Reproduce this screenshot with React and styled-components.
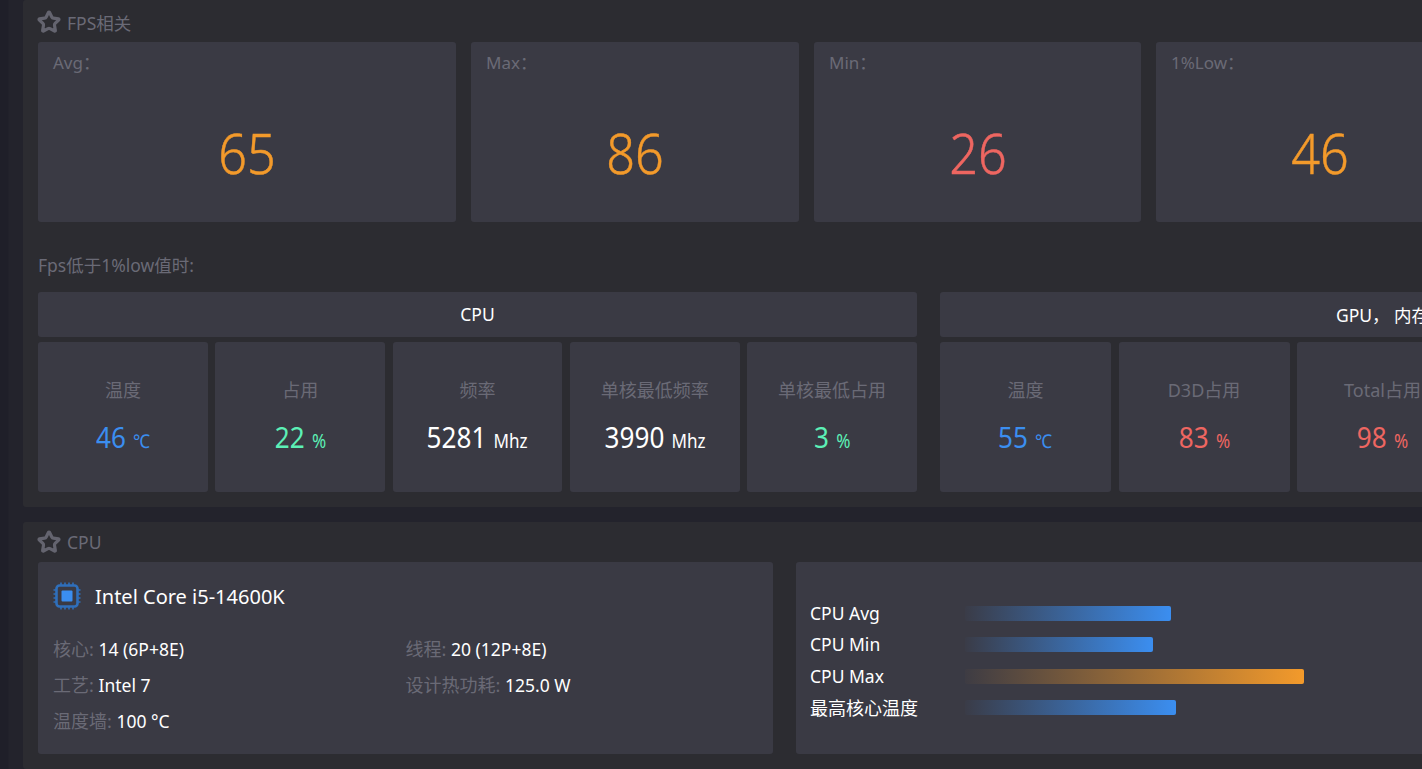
import React from 'react';
import styled, { createGlobalStyle } from 'styled-components';
import { Star } from 'lucide-react';

const Global = createGlobalStyle`
  html, body { margin: 0; padding: 0; height: 100%; overflow: hidden; background: #23232c; }
  * { box-sizing: border-box; }
  body { font-family: "Noto Sans", "Noto Sans CJK SC", sans-serif; }
`;

const muted = '#6a6a76';

const Page = styled.div`
  width: 1860px; height: 769px; overflow: hidden;
  display: flex; flex-direction: column; gap: 15px;
  padding-left: 23px;
  background: linear-gradient(90deg, #1f1f29 0, #1f1f29 8px, #23232c 9px);
`;
const Panel = styled.section`
  width: 1817px; flex: none;
  background: #2c2c31; border-radius: 3px;
  padding: 0 15px 15px;
`;
const PanelTitle = styled.div`
  height: ${p => p.$height}px; display: flex; align-items: center; gap: 6px;
  padding-top: ${p => p.$top}px; margin-left: -1px;
  color: ${muted}; font-size: 17.5px;
  svg { flex: none; }
`;
const Card = styled.div`
  background: #3a3a44; border-radius: 3px;
`;
const FpsRow = styled.div`
  display: grid; grid-template-columns: 418px 328px 327px 327px 1fr; gap: 15px;
`;
const FpsCard = styled(Card)`
  height: 180px; padding: 10px 15px;
  display: flex; flex-direction: column;
`;
const FpsLabel = styled.div`color: ${muted}; font-size: 17px; line-height: 22px;`;
const FpsValue = styled.div`
  flex: 1; display: flex; align-items: center; justify-content: center;
  padding-top: 18px; font-size: 56px; line-height: 60px; font-weight: 300;
  color: ${p => p.$color};
  span { display: inline-block; transform: scaleX(0.9); -webkit-text-stroke: 0.5px ${p => p.$color}; }
`;
const Hint = styled.div`
  color: ${muted}; font-size: 17.5px; line-height: 22px;
  margin: 32px 0 16px;
`;
const Groups = styled.div`
  display: grid; grid-template-columns: 879px 885px; gap: 23px;
`;
const Group = styled.div`display: flex; flex-direction: column; gap: 5px;`;
const GroupHead = styled(Card)`
  height: 45px; display: flex; align-items: center; justify-content: center;
  padding-bottom: 1px;
  color: #fff; font-size: 17.5px; white-space: pre;
`;
const Cells = styled.div`display: grid; grid-template-columns: repeat(5, 1fr); gap: 7.5px;`;
const Cell = styled(Card)`
  height: 150px; display: flex; flex-direction: column; align-items: center;
  padding-top: 36px;
`;
const CellLabel = styled.div`color: ${muted}; font-size: 18px; line-height: 25px;`;
const CellValue = styled.div`
  margin-top: 15px; font-size: 29px; line-height: 38px; color: ${p => p.$color};
  transform: scaleX(0.9);
  small { font-size: 19px; margin-left: 8px; }
`;
const CpuRow = styled.div`display: grid; grid-template-columns: 735px 1fr; gap: 23px;`;
const InfoCard = styled(Card)`height: 192px; padding: 18px 15px 0;`;
const InfoHead = styled.div`
  display: flex; align-items: center; gap: 14px; height: 32px;
  color: #fff; font-size: 20px;
`;
const InfoGrid = styled.div`
  display: grid; grid-template-columns: 352.5px 1fr;
  grid-auto-rows: 36px; font-size: 17.5px; line-height: 36px; margin-top: 19px;
  color: #fff;
`;
const InfoLabel = styled.span`color: ${muted}; font-size: 18px;`;
const BarsCard = styled(Card)`height: 192px; padding: 35.5px 15px 0;`;
const BarRow = styled.div`
  display: grid; grid-template-columns: 154px 1fr; align-items: center; height: 31.5px;
  color: #fff; font-size: 17.5px;
`;
const BarLabel = styled.div`
  margin: -1px 0 0 -1px; white-space: nowrap;
  font-size: ${p => (p.$cjk ? 18 : 17.5)}px;
`;
const Bar = styled.div`
  height: 15px; border-radius: 2px;
  background: linear-gradient(90deg, rgba(${p => p.$rgb}, 0.02), rgb(${p => p.$rgb}));
`;

const blue = '#3b8ef0', red = '#ee6661', orange = '#f39a2b', green = '#5cf0b6', white = '#fff';

const Chip = () => (
  <svg width="28" height="28" viewBox="0 0 28 28" fill="none">
    <rect x="3.5" y="3.5" width="21" height="21" rx="3" stroke="#2f6fbb" strokeWidth="2.6" />
    <rect x="8.5" y="8.5" width="11" height="11" rx="1" fill="#3b8ef0" />
    {[7, 11, 15, 19].map(v => (
      <g key={v} stroke="#2f6fbb" strokeWidth="1.6">
        <path d={`M${v + 1} 0.5v2.5M${v + 1} 25v2.5M0.5 ${v + 1}h2.5M25 ${v + 1}h2.5`} />
      </g>
    ))}
  </svg>
);

const Title = ({ children, top, height }) => (
  <PanelTitle $top={top} $height={height}>
    <Star size={24} color="#64646f" strokeWidth={3.2} />
    {children}
  </PanelTitle>
);

const fps = [['Avg：', '65', orange], ['Max：', '86', orange], ['Min：', '26', red], ['1%Low：', '46', orange]];
const cpu = [['温度', '46', '℃', blue], ['占用', '22', '%', green], ['频率', '5281', 'Mhz', white], ['单核最低频率', '3990', 'Mhz', white], ['单核最低占用', '3', '%', green]];
const gpu = [['温度', '55', '℃', blue], ['D3D占用', '83', '%', red], ['Total占用', '98', '%', red], ['频率', '2700', 'Mhz', white], ['显存占用', '50', '%', green]];
const bars = [['CPU Avg', 206, '59,142,240'], ['CPU Min', 188, '59,142,240'], ['CPU Max', 339, '243,154,43'], ['最高核心温度', 211, '59,142,240', true]];
const info = [['核心', '14 (6P+8E)'], ['线程', '20 (12P+8E)'], ['工艺', 'Intel 7'], ['设计热功耗', '125.0 W'], ['温度墙', '100 °C']];

const renderCells = list => (
  <Cells>
    {list.map(([label, value, unit, color]) => (
      <Cell key={label}>
        <CellLabel>{label}</CellLabel>
        <CellValue $color={color}>{value}<small>{unit}</small></CellValue>
      </Cell>
    ))}
  </Cells>
);

export default function App() {
  return (
    <Page>
      <Global />
      <Panel>
        <Title top={2} height={42}>FPS相关</Title>
        <FpsRow>
          {fps.map(([label, value, color]) => (
            <FpsCard key={label}>
              <FpsLabel>{label}</FpsLabel>
              <FpsValue $color={color}><span>{value}</span></FpsValue>
            </FpsCard>
          ))}
        </FpsRow>
        <Hint>Fps低于1%low值时:</Hint>
        <Groups>
          <Group>
            <GroupHead>CPU</GroupHead>
            {renderCells(cpu)}
          </Group>
          <Group>
            <GroupHead>GPU， 内存</GroupHead>
            {renderCells(gpu)}
          </Group>
        </Groups>
      </Panel>
      <Panel>
        <Title top={0} height={40}>CPU</Title>
        <CpuRow>
          <InfoCard>
            <InfoHead><Chip />Intel Core i5-14600K</InfoHead>
            <InfoGrid>
              {info.map(([label, value]) => (
                <div key={label}><InfoLabel>{label}: </InfoLabel>{value}</div>
              ))}
            </InfoGrid>
          </InfoCard>
          <BarsCard>
            {bars.map(([label, w, rgb, cjk]) => (
              <BarRow key={label}>
                <BarLabel $cjk={cjk}>{label}</BarLabel>
                <Bar $rgb={rgb} style={{ width: w }} />
              </BarRow>
            ))}
          </BarsCard>
        </CpuRow>
      </Panel>
    </Page>
  );
}
